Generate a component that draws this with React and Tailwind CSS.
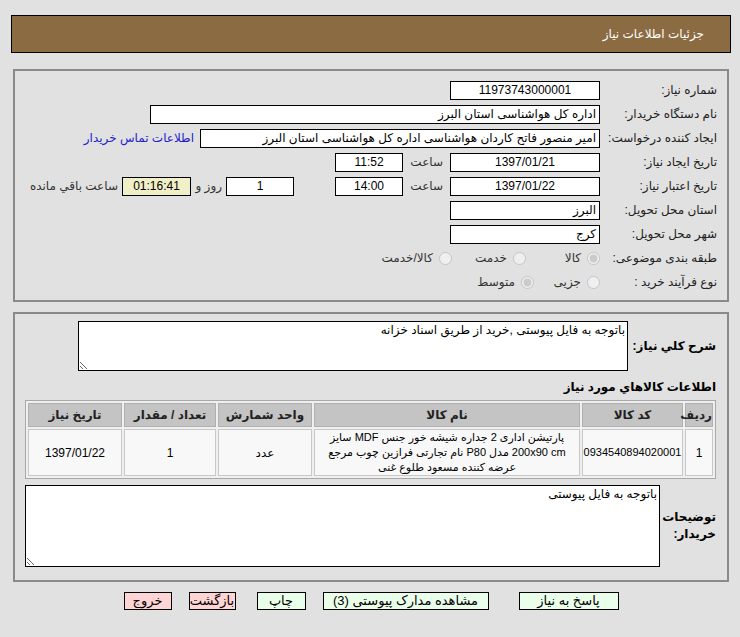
import { useState } from "react";

const font = { fontFamily: "Tahoma, 'Liberation Sans', 'DejaVu Sans', sans-serif" };

function Box({ className = "", children }) {
  return (
    <div className={`h-[19px] border border-black bg-white text-[12px] leading-[17px] px-[3px] whitespace-nowrap overflow-hidden ${className}`}>
      {children}
    </div>
  );
}

function Row({ label, children }) {
  return (
    <div className="flex h-[24px] items-center">
      <div className="w-[112px] shrink-0 text-[12px] text-[#222]">{label}</div>
      <div className="flex items-center mr-[5px]">{children}</div>
    </div>
  );
}

function Radio({ checked, text, className = "" }) {
  return (
    <label className={`flex items-center gap-[6px] text-[12px] text-[#333] ${className}`}>
      <input type="radio" disabled checked={checked} readOnly className="m-0 w-[13px] h-[13px]" />
      <span>{text}</span>
    </label>
  );
}

const cols = [
  { t: "ردیف", w: "w-[28px]" },
  { t: "کد کالا", w: "w-[101px]" },
  { t: "نام کالا", w: "w-[266px]" },
  { t: "واحد شمارش", w: "w-[94px]" },
  { t: "تعداد / مقدار", w: "w-[92px]" },
  { t: "تاریخ نیاز", w: "w-[94px]" },
];

const cell = "border border-[#c8c8c8] bg-[#f8f8f8] p-0";

export default function App() {
  const [note] = useState("باتوجه به فایل پیوستی ,خرید از طریق اسناد خزانه");

  return (
    <div dir="rtl" style={font} className="min-h-[637px] bg-[#e1e1e1] pt-[15px] pr-[9px] pl-[11px] text-black">
      <div className="h-[38px] border border-black bg-[#8b6b42] flex items-center pr-[26px] text-white text-[12px]">
        جزئیات اطلاعات نیاز
      </div>

      <div className="mt-[16px] mx-[2px] border-2 border-[#8a8a8a] pt-[7px] pb-[6px] pr-[10px]">
        <Row label="شماره نیاز:">
          <Box className="w-[150px] text-center">11973743000001</Box>
        </Row>
        <Row label="نام دستگاه خریدار:">
          <Box className="w-[450px]">اداره کل هواشناسی استان البرز</Box>
        </Row>
        <Row label="ایجاد کننده درخواست:">
          <Box className="w-[400px]">امیر منصور فاتح کاردان هواشناسی اداره کل هواشناسی استان البرز</Box>
          <a className="mr-[6px] text-[12px] text-[#2222cc]">اطلاعات تماس خریدار</a>
        </Row>
        <Row label="تاریخ ایجاد نیاز:">
          <Box className="w-[150px] text-center">1397/01/21</Box>
          <span className="w-[40px] mr-[7px] text-[12px] text-[#333]">ساعت</span>
          <Box className="w-[68px] text-center">11:52</Box>
        </Row>
        <Row label="تاریخ اعتبار نیاز:">
          <Box className="w-[150px] text-center">1397/01/22</Box>
          <span className="w-[40px] mr-[7px] text-[12px] text-[#333]">ساعت</span>
          <Box className="w-[68px] text-center">14:00</Box>
          <Box className="w-[68px] mr-[41px] text-center">1</Box>
          <span className="w-[31px] mr-[4px] text-[12px] text-[#333]">روز و</span>
          <Box className="w-[69px] !bg-[#f1efc7] text-center">01:16:41</Box>
          <span className="mr-[4px] text-[12px] text-[#333]">ساعت باقي مانده</span>
        </Row>
        <Row label="استان محل تحویل:">
          <Box className="w-[150px]">البرز</Box>
        </Row>
        <Row label="شهر محل تحویل:">
          <Box className="w-[150px]">کرج</Box>
        </Row>
        <Row label="طبقه بندی موضوعی:">
          <Radio checked text="کالا" className="w-[74px]" />
          <Radio text="خدمت" className="w-[74px]" />
          <Radio text="کالا/خدمت" />
        </Row>
        <Row label="نوع فرآیند خرید :">
          <Radio text="جزیی" className="w-[66px]" />
          <Radio checked text="متوسط" />
        </Row>
      </div>

      <div className="mt-[10px] mx-[2px] h-[270px] border-2 border-[#8a8a8a] pt-[7px] pr-[11px]">
        <div className="flex items-center">
          <div className="w-[88px] shrink-0 text-[12px] font-bold whitespace-nowrap">شرح کلي نیاز:</div>
          <textarea
            readOnly
            value={note}
            className="w-[550px] h-[50px] border border-black bg-white text-[12px] px-[2px] leading-[16px] resize outline-none"
          />
        </div>
        <div className="mt-[8px] text-[12px] font-bold leading-[16px]">اطلاعات کالاهاي مورد نیاز</div>
        <table className="mt-[5px] table-fixed w-[691px] border border-[#a8a8a8] border-separate border-spacing-[2px] text-[12px] bg-[#f0f0f0]">
          <thead>
            <tr>
              {cols.map((c) => (
                <th key={c.t} className={`${c.w} h-[24px] p-0 bg-[#c4c4c4] font-bold text-[#222] border border-[#b0b0b0]`}>
                  {c.t}
                </th>
              ))}
            </tr>
          </thead>
          <tbody>
            <tr className="text-center">
              <td className={`h-[46px] ${cell}`}>1</td>
              <td className={`${cell} text-[11px]`}>0934540894020001</td>
              <td className={`${cell} text-[11px] leading-[15px] px-[3px]`}>
                پارتیشن اداری 2 جداره شیشه خور جنس MDF سایز 200x90 cm مدل P80 نام تجارتی فرازین چوب مرجع عرضه کننده مسعود طلوع غنی
              </td>
              <td className={cell}>عدد</td>
              <td className={cell}>1</td>
              <td className={cell}>1397/01/22</td>
            </tr>
          </tbody>
        </table>
        <div className="mt-[6px] flex items-center">
          <div className="w-[56px] shrink-0 text-[12px] font-bold leading-[17px]">
            توضیحات
            <br />
            خریدار:
          </div>
          <textarea
            readOnly
            value="باتوجه به فایل پیوستی"
            className="w-[635px] h-[82px] border border-black bg-white text-[12px] px-[2px] leading-[16px] resize outline-none"
          />
        </div>
      </div>

      <div className="mt-[10px] flex justify-center gap-[17px] text-[13px]">
        <button className="w-[100px] h-[18px] border border-black bg-[#eaffea] leading-[16px]">پاسخ به نیاز</button>
        <button className="w-[166px] h-[18px] border border-black bg-[#eaffea] leading-[16px] mr-[13px]">مشاهده مدارک پیوستی (3)</button>
        <button className="w-[49px] h-[18px] border border-black bg-[#eaffea] leading-[16px]">چاپ</button>
        <button className="w-[47px] h-[18px] border border-black bg-[#ffd4d4] leading-[16px] mr-[4px]">بازگشت</button>
        <button className="w-[48px] h-[18px] border border-black bg-[#ffd4d4] leading-[16px]">خروج</button>
      </div>
    </div>
  );
}
